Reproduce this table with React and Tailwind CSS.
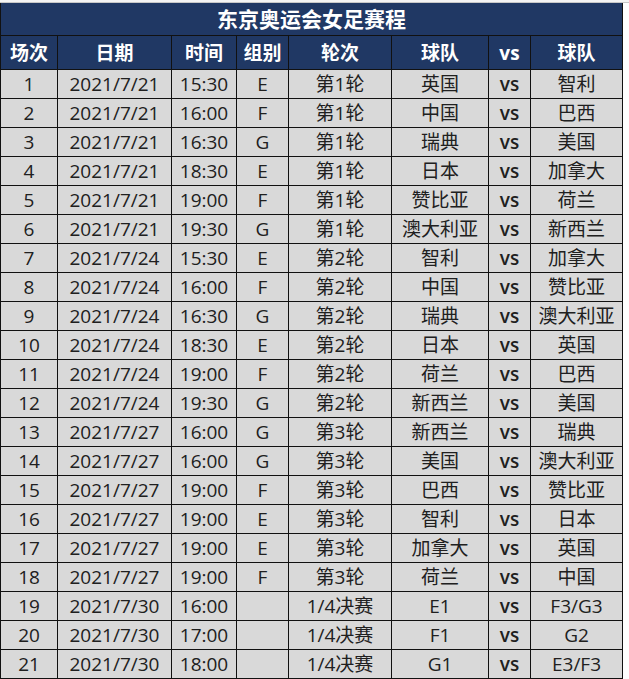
import React from 'react'

const rows = [
  ['1', '2021/7/21', '15:30', 'E', '第1轮', '英国', '智利'],
  ['2', '2021/7/21', '16:00', 'F', '第1轮', '中国', '巴西'],
  ['3', '2021/7/21', '16:30', 'G', '第1轮', '瑞典', '美国'],
  ['4', '2021/7/21', '18:30', 'E', '第1轮', '日本', '加拿大'],
  ['5', '2021/7/21', '19:00', 'F', '第1轮', '赞比亚', '荷兰'],
  ['6', '2021/7/21', '19:30', 'G', '第1轮', '澳大利亚', '新西兰'],
  ['7', '2021/7/24', '15:30', 'E', '第2轮', '智利', '加拿大'],
  ['8', '2021/7/24', '16:00', 'F', '第2轮', '中国', '赞比亚'],
  ['9', '2021/7/24', '16:30', 'G', '第2轮', '瑞典', '澳大利亚'],
  ['10', '2021/7/24', '18:30', 'E', '第2轮', '日本', '英国'],
  ['11', '2021/7/24', '19:00', 'F', '第2轮', '荷兰', '巴西'],
  ['12', '2021/7/24', '19:30', 'G', '第2轮', '新西兰', '美国'],
  ['13', '2021/7/27', '16:00', 'G', '第3轮', '新西兰', '瑞典'],
  ['14', '2021/7/27', '16:00', 'G', '第3轮', '美国', '澳大利亚'],
  ['15', '2021/7/27', '19:00', 'F', '第3轮', '巴西', '赞比亚'],
  ['16', '2021/7/27', '19:00', 'E', '第3轮', '智利', '日本'],
  ['17', '2021/7/27', '19:00', 'E', '第3轮', '加拿大', '英国'],
  ['18', '2021/7/27', '19:00', 'F', '第3轮', '荷兰', '中国'],
  ['19', '2021/7/30', '16:00', '', '1/4决赛', 'E1', 'F3/G3'],
  ['20', '2021/7/30', '17:00', '', '1/4决赛', 'F1', 'G2'],
  ['21', '2021/7/30', '18:00', '', '1/4决赛', 'G1', 'E3/F3'],
]

const heads = ['场次', '日期', '时间', '组别', '轮次', '球队', 'vs', '球队']

const cols = 'grid grid-cols-[57px_114px_65px_52px_103px_97px_42px_92px]'

function App() {
  return (
    <div className="w-[629px] h-[679px] overflow-hidden bg-white font-['Open_Sans','Noto_Sans_CJK_SC',sans-serif]">
      <div className="h-[3px] bg-[#f4f4f4] border-b border-[#c8c8c8]" />
      <div className="flex">
        <div className="w-[623px] border-l border-[#111]">
          <div className="h-[33px] bg-[#203864] border-b border-[#111] border-r flex items-center justify-center text-white font-bold text-[21px] leading-none">
            东京奥运会女足赛程
          </div>
          <div className={`${cols} h-[34px] bg-[#203864] text-white font-bold text-[19px]`}>
            {heads.map((h, i) => (
              <div key={i} className="border-r border-b border-[#111] flex items-center justify-center leading-none pt-px">
                {h}
              </div>
            ))}
          </div>
          {rows.map((r, i) => (
            <div key={i} className={`${cols} h-[29px] bg-[#d9d9d9] text-[#202020] text-[19px]`}>
              {[r[0], r[1], r[2], r[3], r[4], r[5], 'vs', r[6]].map((c, j) => (
                <div
                  key={j}
                  className={`border-r border-b border-[#111] flex items-center justify-center leading-none pt-px ${j === 6 ? 'font-semibold' : ''}`}
                >
                  {c}
                </div>
              ))}
            </div>
          ))}
        </div>
        <div className="flex-1 bg-white" />
      </div>
    </div>
  )
}

export default App
